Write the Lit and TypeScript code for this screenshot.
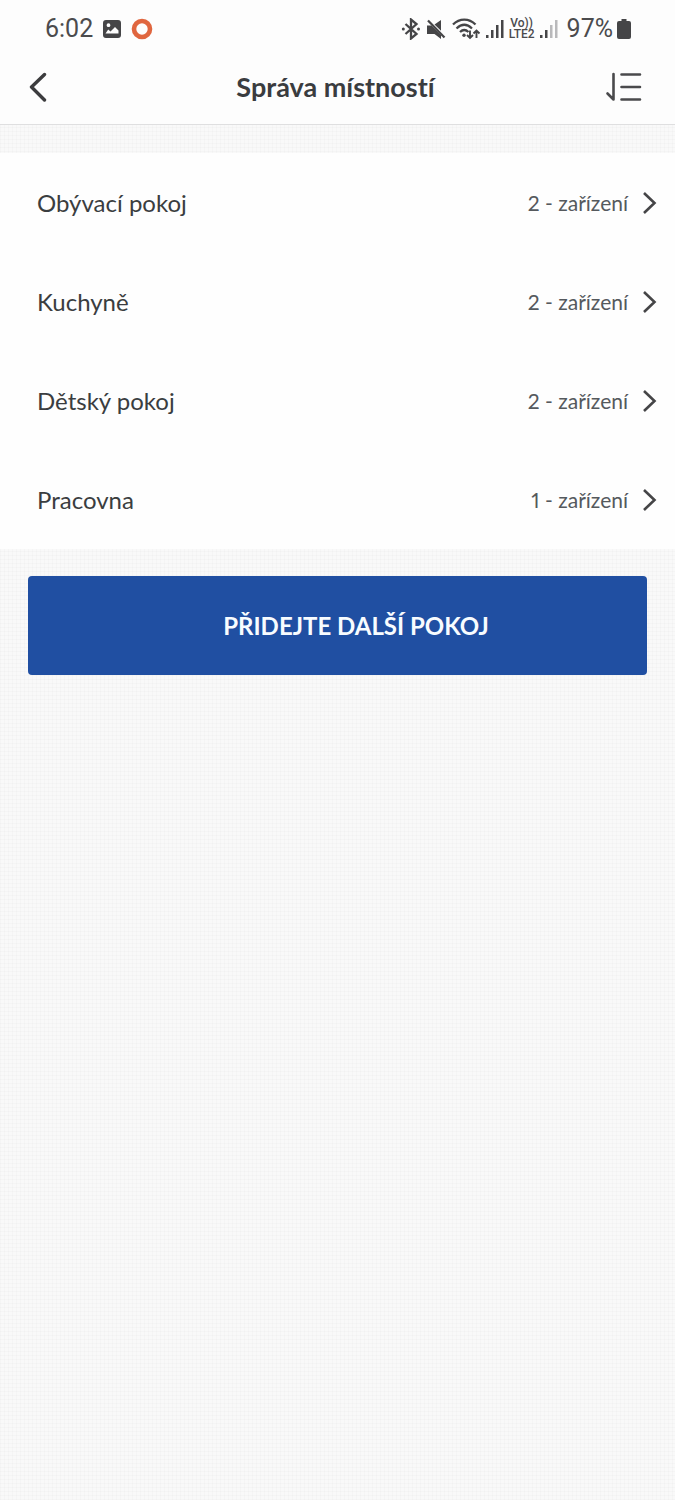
import { LitElement, html, css, svg } from "lit";
import { customElement, property } from "lit/decorators.js";

interface Room {
  name: string;
  devices: number;
}

@customElement("status-bar")
class StatusBar extends LitElement {
  static styles = css`
    :host {
      display: flex;
      justify-content: space-between;
      align-items: center;
      height: 57px;
      padding: 0 44px 0 45px;
      font: 25px/32px Roboto, sans-serif;
      color: #4b4b4d;
    }
    .group {
      display: flex;
      align-items: center;
    }
    .start {
      gap: 9px;
    }
    .end {
      gap: 5px;
    }
    .volte {
      font-size: 12px;
      line-height: 11px;
      font-weight: 500;
      text-align: center;
    }
    .volte span {
      display: block;
    }
    .power {
      display: flex;
      align-items: center;
      gap: 4px;
      margin-left: 4px;
    }
    svg {
      display: block;
    }
  `;

  render() {
    return html`
      <div class="group start">
        <span>6:02</span>
        <svg width="20" height="20" viewBox="0 0 20 20">
          <path
            fill="#454547"
            fill-rule="evenodd"
            d="M4 1h12a3 3 0 0 1 3 3v12a3 3 0 0 1-3 3H4a3 3 0 0 1-3-3V4a3 3 0 0 1 3-3zM3.500 14.500h13v-3l-3.500-3.500-4.500 4.500-2.300-2zM6.500 4.300a1.900 1.900 0 1 0 0 3.800 1.900 1.900 0 0 0 0-3.800z"
          />
        </svg>
        <svg width="22" height="22" viewBox="0 0 22 22">
          <circle cx="11" cy="11" r="8" fill="none" stroke="#e0663f" stroke-width="4.600" />
        </svg>
      </div>
      <div class="group end">
        <svg width="20" height="22" viewBox="0 0 20 22" fill="none" stroke="#454547" stroke-width="2.300">
          <path d="M4.500 6l11 10-5.500 4.500V1.500L15.500 6l-11 10" />
          <circle cx="2.300" cy="11" r="1.500" fill="#454547" stroke="none" />
          <circle cx="17.500" cy="11" r="1.500" fill="#454547" stroke="none" />
        </svg>
        <svg width="20" height="22" viewBox="0 0 20 22">
          <path fill="#454547" d="M1 7.500h4.500l9.500 9.500v4L8.500 16H1zM8.500 6.500L15 2v10.800z" />
          <path d="M2 2.500L18.500 19.500" stroke="#454547" stroke-width="2.200" />
        </svg>
        <svg width="30" height="24" viewBox="0 0 30 24" fill="none" stroke="#454547" stroke-width="2.300">
          <path d="M2 7.500C8.500 1 18 1 24.500 7.500M5.500 11.500c5-4.800 10.500-4.800 15.500 0M9 15c3-2.800 5.500-2.800 8.500 0" />
          <circle cx="13" cy="18.200" r="1.700" fill="#454547" stroke="none" />
          <path stroke-width="1.900" d="M19 13.500v7.500M16 18l3 3 3-3M25.500 21v-7.500M22.500 16.500l3-3 3 3" />
        </svg>
        ${this.signal(4)}
        <div class="volte"><span>Vo))</span><span>LTE2</span></div>
        ${this.signal(2)}
        <div class="power">
          <span>97%</span>
          <svg width="14" height="20" viewBox="0 0 14 20">
            <path
              fill="#454547"
              d="M4.500 0h5v2H12a2 2 0 0 1 2 2v14a2 2 0 0 1-2 2H2a2 2 0 0 1-2-2V4a2 2 0 0 1 2-2h2.500z"
            />
          </svg>
        </div>
      </div>
    `;
  }

  private signal(level: number) {
    const bars = [3, 8, 13, 18];
    return html`<svg width="18" height="20" viewBox="0 0 18 20">
      ${bars.map(
        (h, i) => svg`<rect x=${i * 5} y=${19 - h} width="2.500" height=${h}
          fill=${i < level ? "#454547" : "#b9b9bb"} />`
      )}
    </svg>`;
  }
}

@customElement("room-row")
class RoomRow extends LitElement {
  @property({ attribute: false }) room!: Room;

  static styles = css`
    :host {
      display: block;
    }
    .row {
      display: flex;
      justify-content: space-between;
      align-items: center;
      box-sizing: border-box;
      height: 99px;
      padding: 0 18px 0 37px;
      color: #3a3d40;
      text-decoration: none;
      font-size: 24px;
      line-height: 32px;
    }
    .detail {
      display: flex;
      align-items: center;
      gap: 14px;
      font-size: 21px;
      color: #55595d;
      font-variant-numeric: proportional-nums;
    }
  `;

  render() {
    return html`
      <a class="row" href="#">
        <span>${this.room.name}</span>
        <span class="detail">
          ${this.room.devices} - zařízení
          <svg width="15" height="24" viewBox="0 0 15 24" fill="none" stroke="#454547" stroke-width="2.600">
            <path d="M2 2l10.500 10L2 22" />
          </svg>
        </span>
      </a>
    `;
  }
}

@customElement("app-root")
class AppRoot extends LitElement {
  private rooms: Room[] = [
    { name: "Obývací pokoj", devices: 2 },
    { name: "Kuchyně", devices: 2 },
    { name: "Dětský pokoj", devices: 2 },
    { name: "Pracovna", devices: 1 },
  ];

  static styles = css`
    :host {
      display: block;
      min-height: 100vh;
      font-family: Lato, sans-serif;
      font-variant-ligatures: none;
      background-color: #f9f9f9;
      background-image: repeating-linear-gradient(90deg, rgba(0, 0, 0, 0.016) 0 1px, transparent 1px 4px),
        repeating-linear-gradient(0deg, rgba(0, 0, 0, 0.016) 0 1px, transparent 1px 4px);
    }
    .top {
      background: #fdfdfd;
      border-bottom: 1px solid #dfdfe0;
    }
    .bar {
      display: grid;
      grid-template-columns: 1fr auto 1fr;
      align-items: center;
      height: 59px;
      padding: 0 32px 8px 28px;
    }
    h1 {
      margin: 0;
      font-size: 27px;
      line-height: 36px;
      font-weight: 700;
      color: #3a3c3f;
    }
    .icon {
      display: block;
      padding: 0;
      border: 0;
      background: none;
    }
    .icon svg {
      display: block;
    }
    .sort {
      justify-self: end;
    }
    .rooms {
      margin: 28px 0 27px;
      padding: 0;
      list-style: none;
      background: #fefefe;
    }
    .add {
      display: block;
      box-sizing: border-box;
      width: calc(100% - 56px);
      height: 99px;
      margin: 0 28px;
      padding: 0 0 0 37px;
      border: 0;
      border-radius: 4px;
      background: #204fa2;
      color: #f8fcff;
      font: inherit;
      font-size: 24px;
      font-weight: 700;
    }
  `;

  render() {
    return html`
      <header class="top">
        <status-bar></status-bar>
        <div class="bar">
          <button class="icon" aria-label="Zpět">
            <svg width="20" height="30" viewBox="0 0 20 30" fill="none" stroke="#3c3c3e" stroke-width="3.400" stroke-linecap="round" stroke-linejoin="round">
              <path d="M16.500 2.500L3.500 15l13 13" />
            </svg>
          </button>
          <h1>Správa místností</h1>
          <button class="icon sort" aria-label="Seřadit">
            <svg width="38" height="30" viewBox="0 0 38 30" fill="none" stroke="#4a4a4c" stroke-width="2.600" stroke-linecap="round" stroke-linejoin="round">
              <path d="M8.500 2v25.500l-6-6M16.500 2.500h18.500M16.500 15h18.500M16.500 27.500h18.500" />
            </svg>
          </button>
        </div>
      </header>
      <main>
        <ul class="rooms">
          ${this.rooms.map((room) => html`<li><room-row .room=${room}></room-row></li>`)}
        </ul>
        <button class="add">PŘIDEJTE DALŠÍ POKOJ</button>
      </main>
    `;
  }
}
